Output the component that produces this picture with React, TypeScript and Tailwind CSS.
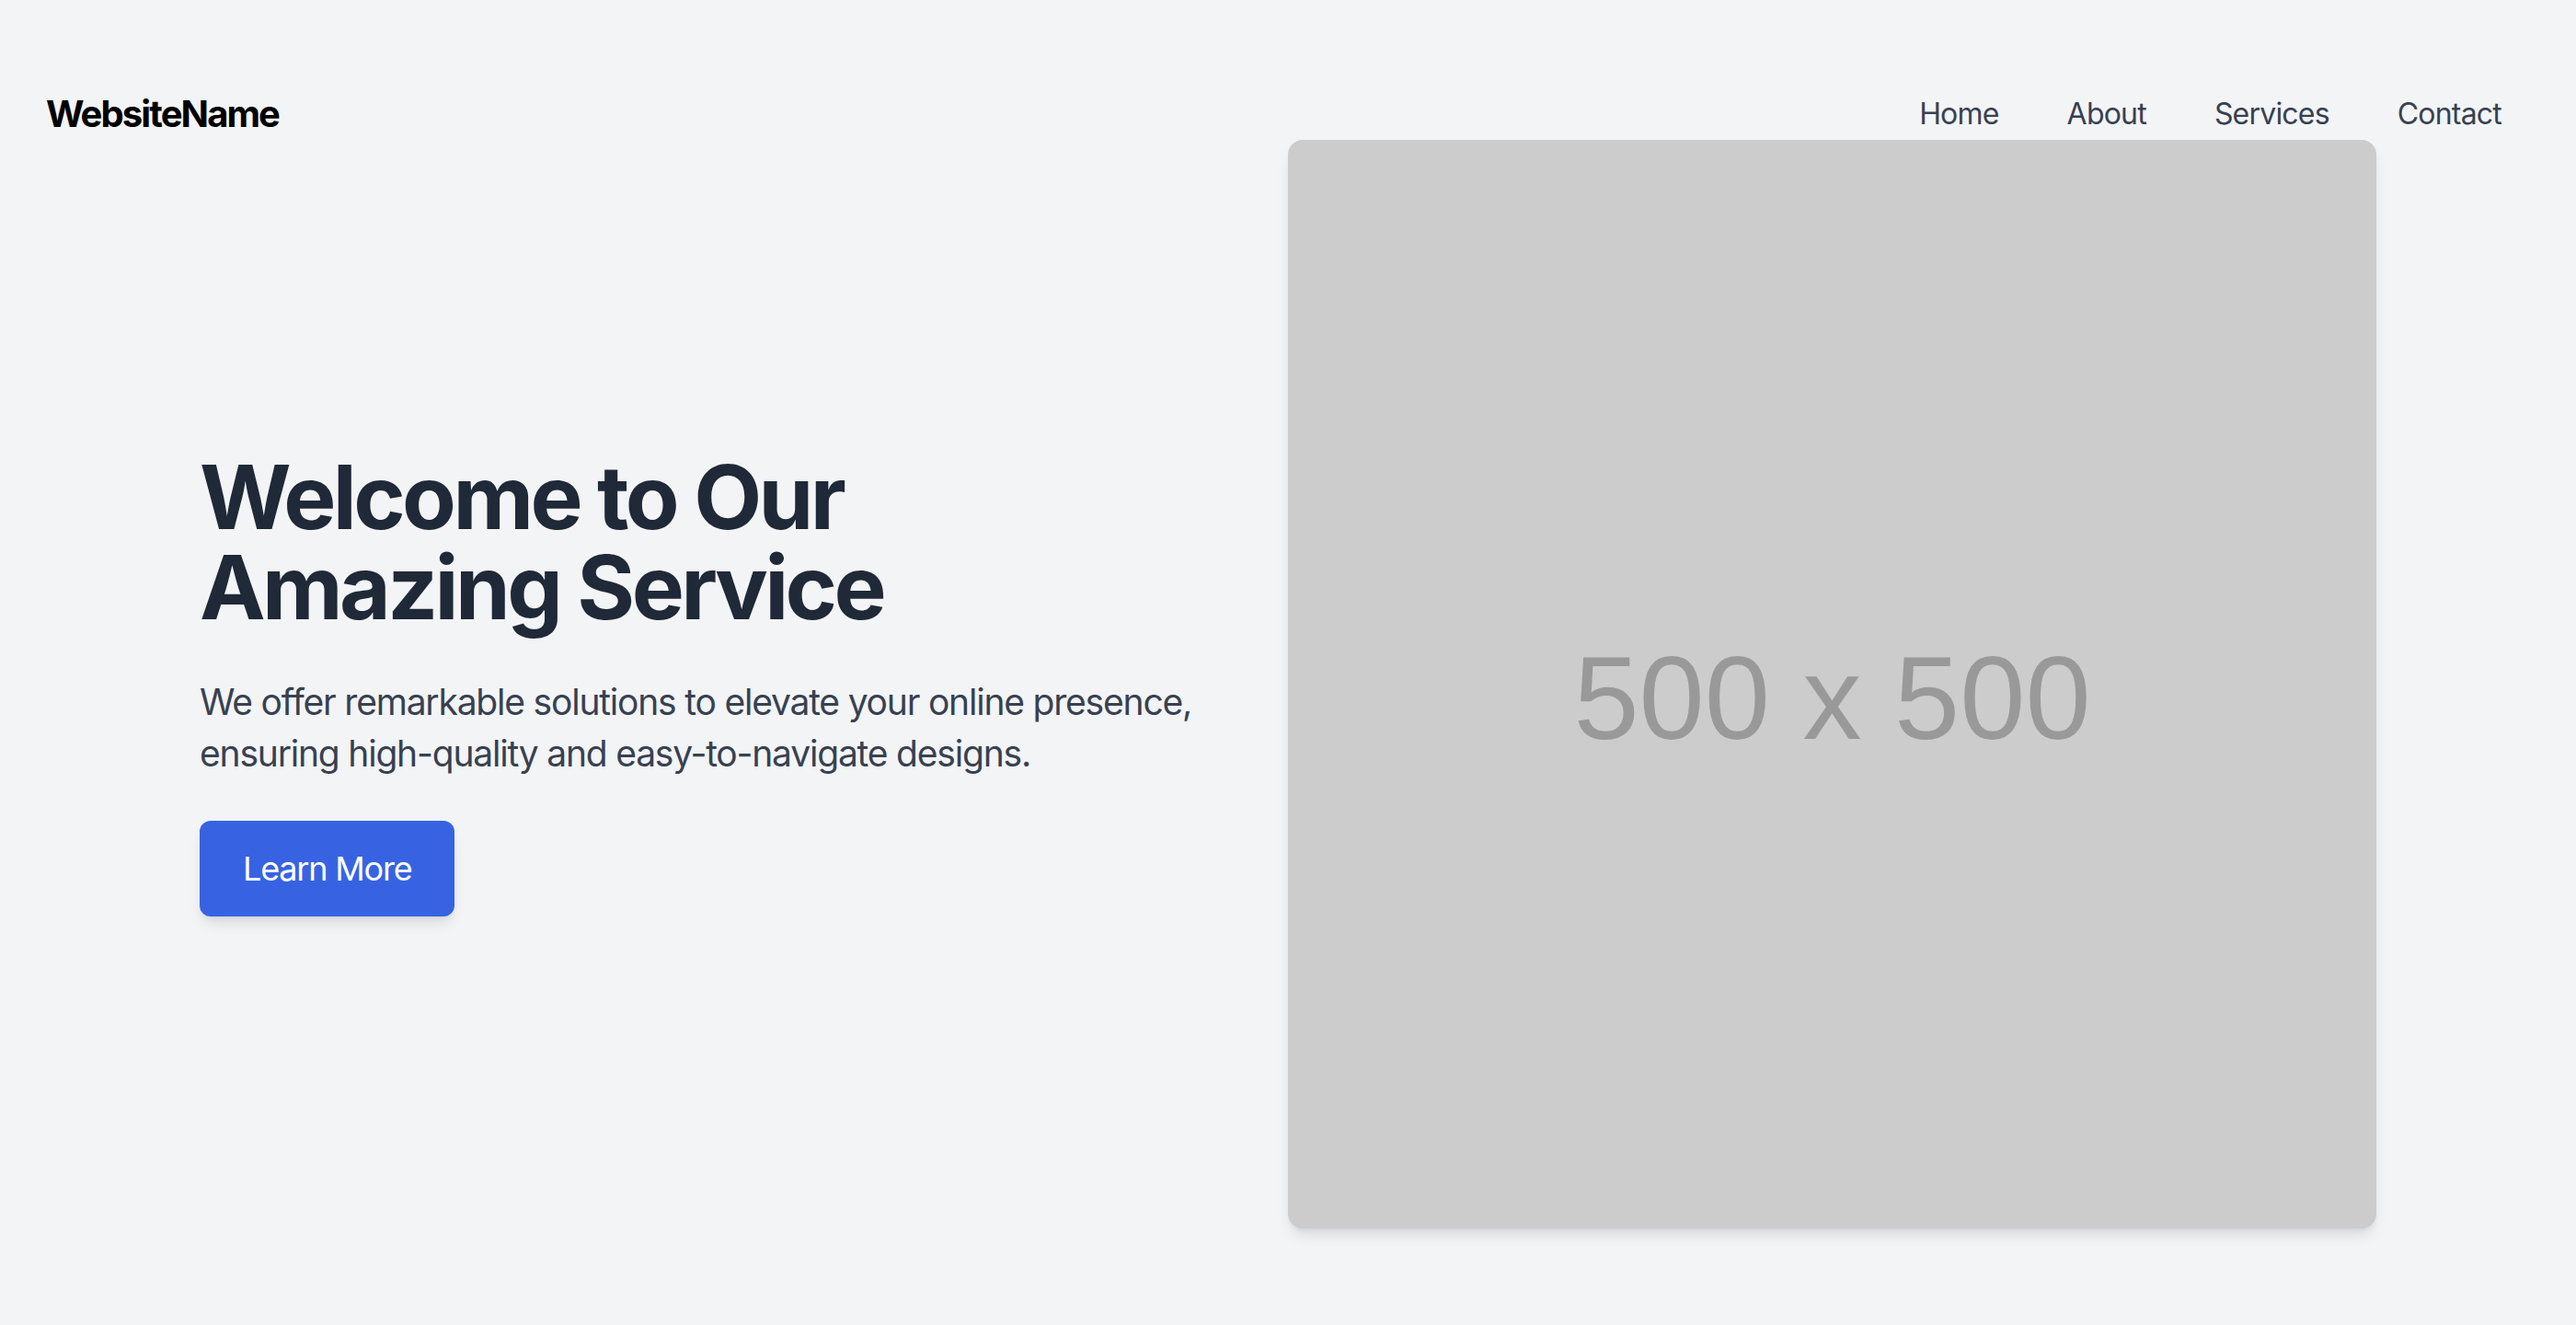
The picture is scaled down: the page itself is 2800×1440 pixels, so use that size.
import React from "react";

const links = ["Home", "About", "Services", "Contact"];

const App = () => {
  return (
    <div className="min-h-screen bg-[#f3f4f6] font-['Inter',sans-serif]">
      <header className="flex items-center justify-between pt-[96px] pl-[50px] pr-[81px]">
        <div className="h-[56px] flex items-center text-[40px] font-bold text-black tracking-[-1.9px]">
          WebsiteName
        </div>
        <nav className="flex items-center gap-[74px]">
          {links.map((l) => (
            <a key={l} href="#" className="text-[32px] leading-[48px] text-[#374151] tracking-[-0.8px]">
              {l}
            </a>
          ))}
        </nav>
      </header>

      <main className="grid grid-cols-2 items-center px-[217px]">
        <div className="flex flex-col items-start">
          <h1 className="text-[96px] leading-[98px] font-bold text-[#1f2937] tracking-[-3.6px]">
            Welcome to Our
            <br />
            Amazing Service
          </h1>
          <p className="mt-[48px] text-[39px] leading-[56px] text-[#374151] tracking-[-1.2px]">
            We offer remarkable solutions to elevate your online presence,
            <br />
            ensuring high-quality and easy-to-navigate designs.
          </p>
          <button className="mt-[45px] px-[47px] py-[24px] rounded-[12px] bg-[#3763e3] text-white text-[36px] leading-[56px] tracking-[-1.2px] shadow-lg">
            Learn More
          </button>
        </div>

        <div className="w-[1183px] h-[1183px] rounded-[16px] bg-[#cccccc] shadow-lg flex items-center justify-center pt-[30px]">
          <span className="font-['Liberation_Sans',Arial,sans-serif] text-[128px] text-[#999999]">
            500 x 500
          </span>
        </div>
      </main>
    </div>
  );
};

export default App;
